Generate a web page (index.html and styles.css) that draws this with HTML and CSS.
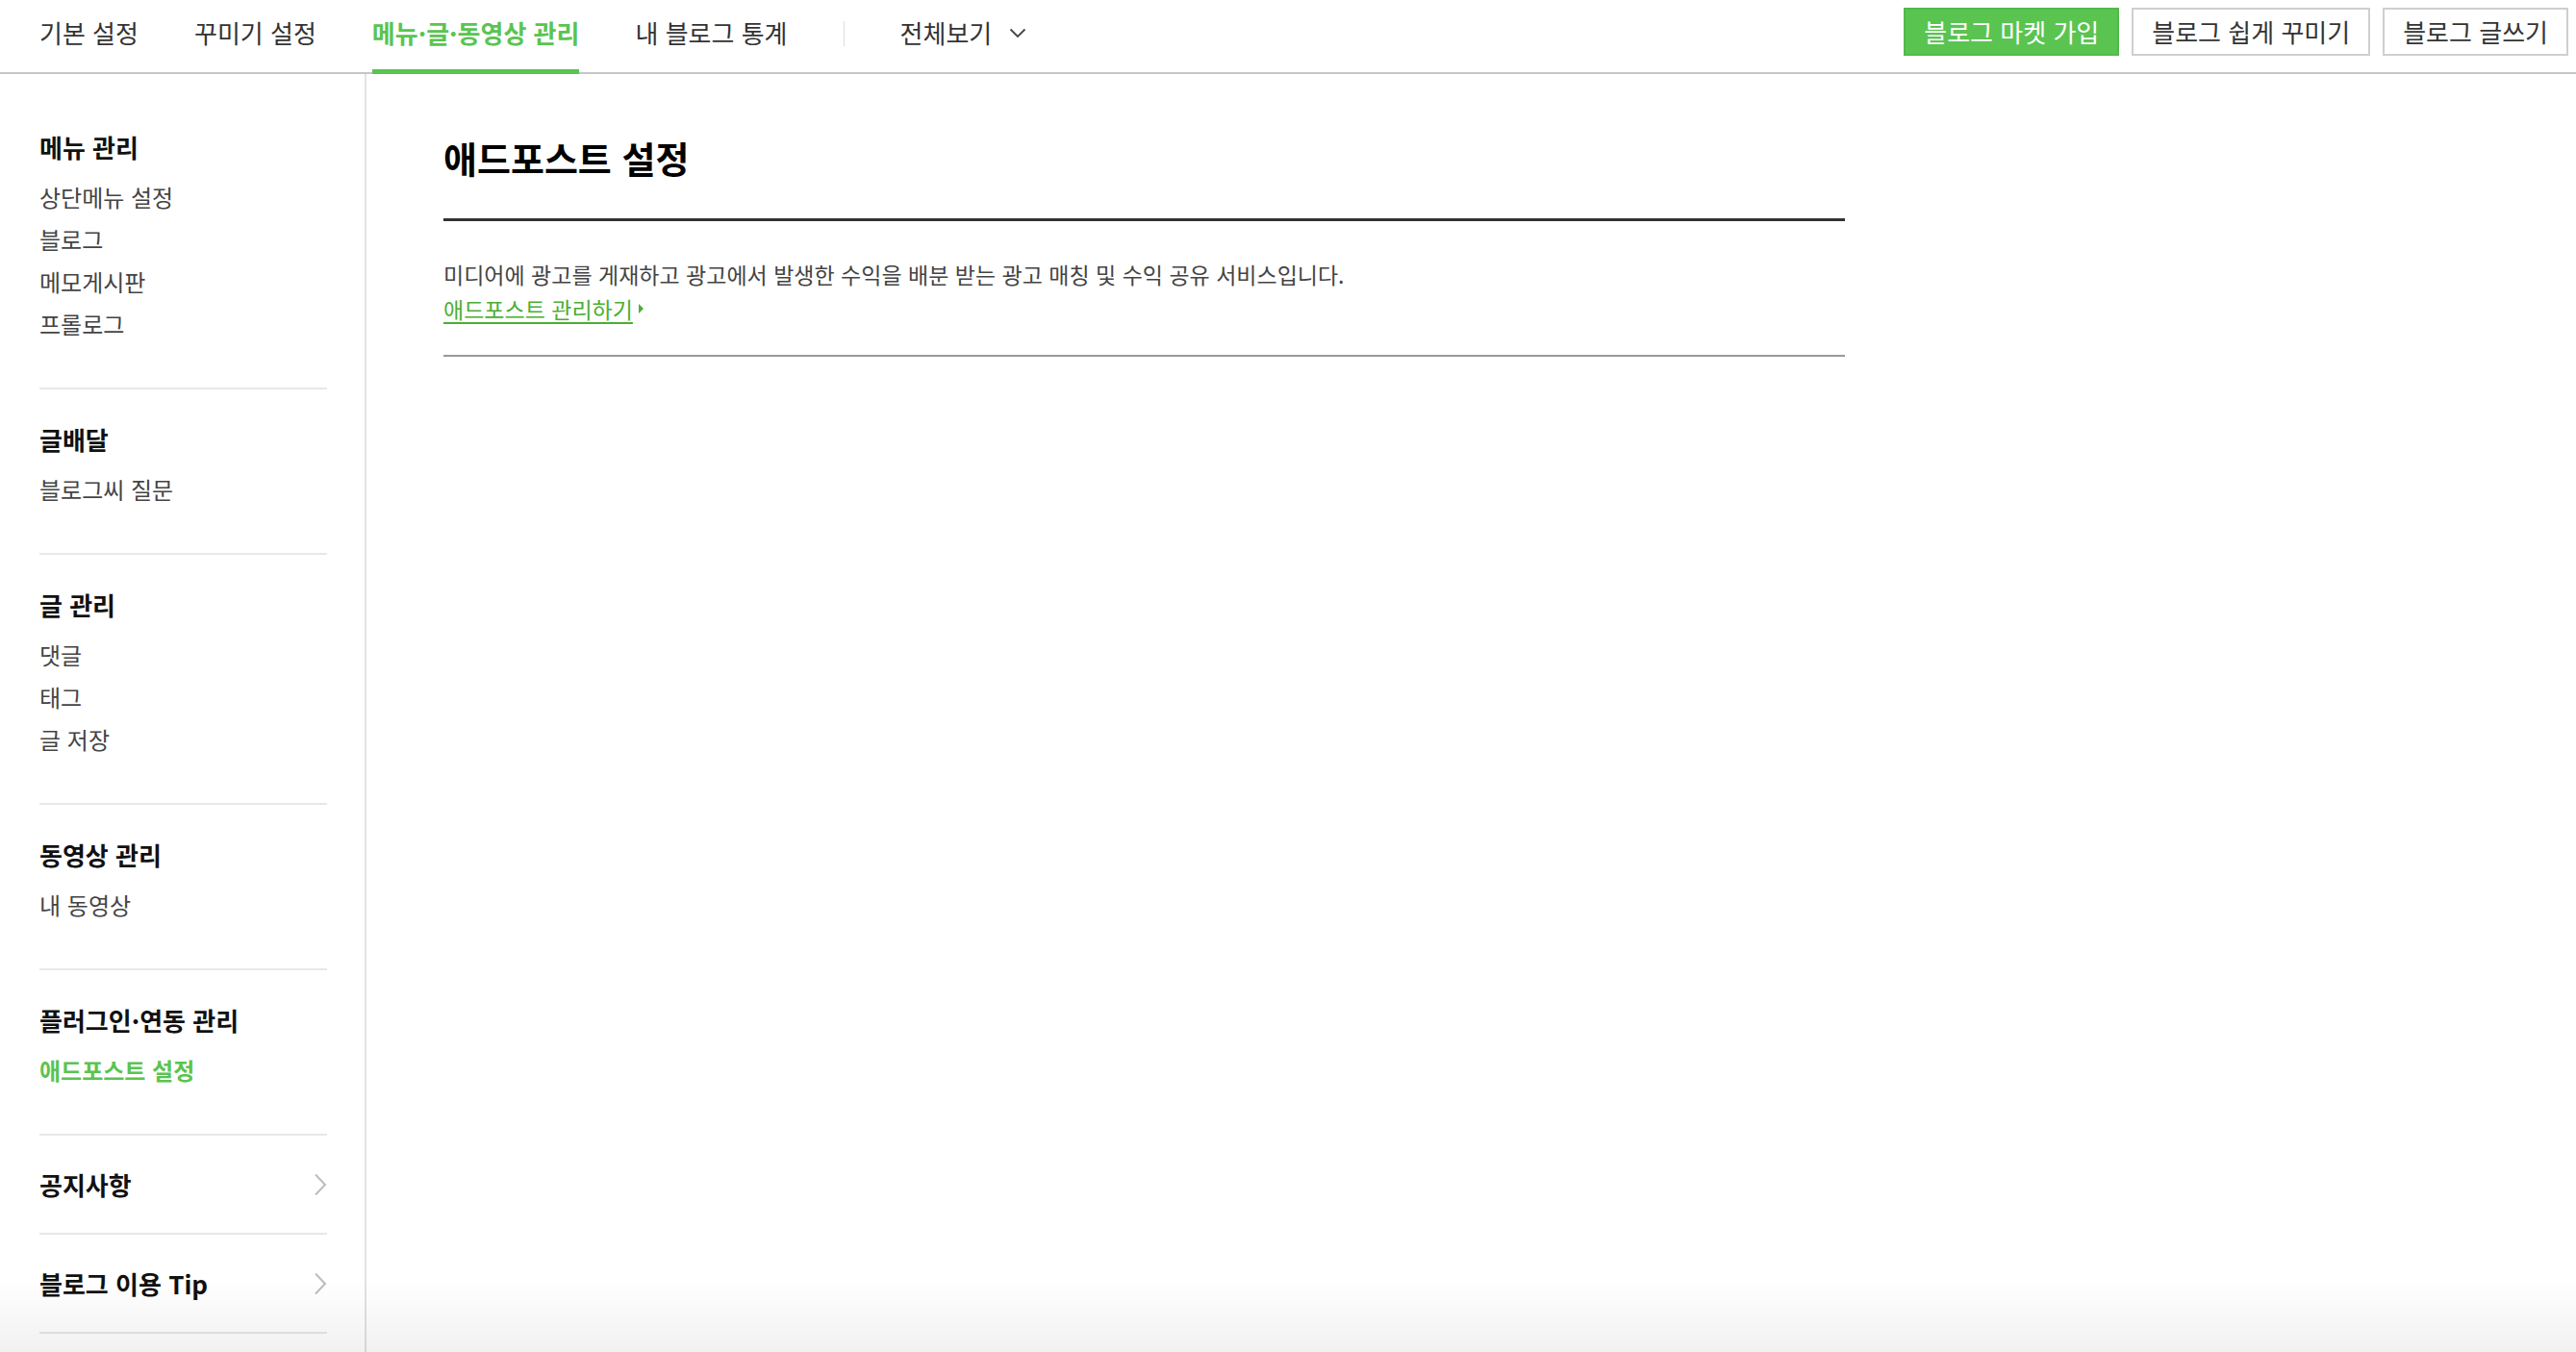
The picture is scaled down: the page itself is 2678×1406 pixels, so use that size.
FILE: index.html
```html
<!DOCTYPE html>
<html lang="ko">
<head>
    <meta charset="UTF-8">
    <meta name="viewport" content="width=device-width, initial-scale=1.0">
    <title>애드포스트 설정</title>
    <link rel="stylesheet" href="styles.css">
</head>
<body>
    <header class="top-header">
        <nav class="top-nav">
            <a class="nav-item">기본 설정</a>
            <a class="nav-item">꾸미기 설정</a>
            <a class="nav-item active">메뉴·글·동영상 관리</a>
            <a class="nav-item">내 블로그 통계</a>
            <span class="nav-divider"></span>
            <a class="nav-item nav-all">전체보기
                <svg class="nav-caret" width="18" height="11" viewBox="0 0 18 11"><path d="M1.5 1.5 L9 9 L16.5 1.5" fill="none" stroke="#444" stroke-width="1.8"/></svg>
            </a>
        </nav>
        <div class="top-buttons">
            <a class="top-btn btn-green">블로그 마켓 가입</a>
            <a class="top-btn">블로그 쉽게 꾸미기</a>
            <a class="top-btn">블로그 글쓰기</a>
        </div>
    </header>

    <div class="layout">
        <aside class="sidebar">
            <div class="side-section">
                <h3 class="side-title">메뉴 관리</h3>
                <ul class="side-list">
                    <li>상단메뉴 설정</li>
                    <li>블로그</li>
                    <li>메모게시판</li>
                    <li>프롤로그</li>
                </ul>
            </div>
            <div class="side-section">
                <h3 class="side-title">글배달</h3>
                <ul class="side-list">
                    <li>블로그씨 질문</li>
                </ul>
            </div>
            <div class="side-section">
                <h3 class="side-title">글 관리</h3>
                <ul class="side-list">
                    <li>댓글</li>
                    <li>태그</li>
                    <li>글 저장</li>
                </ul>
            </div>
            <div class="side-section">
                <h3 class="side-title">동영상 관리</h3>
                <ul class="side-list">
                    <li>내 동영상</li>
                </ul>
            </div>
            <div class="side-section">
                <h3 class="side-title">플러그인·연동 관리</h3>
                <ul class="side-list">
                    <li class="current">애드포스트 설정</li>
                </ul>
            </div>
            <div class="side-section side-link">
                <h3 class="side-title">공지사항</h3>
                <svg class="side-arrow" width="14" height="24" viewBox="0 0 14 24"><path d="M2 1.5 L12 12 L2 22.5" fill="none" stroke="#bdbdbd" stroke-width="2"/></svg>
            </div>
            <div class="side-section side-link last">
                <h3 class="side-title">블로그 이용 Tip</h3>
                <svg class="side-arrow" width="14" height="24" viewBox="0 0 14 24"><path d="M2 1.5 L12 12 L2 22.5" fill="none" stroke="#bdbdbd" stroke-width="2"/></svg>
            </div>
        </aside>

        <main class="content">
            <h2 class="page-title">애드포스트 설정</h2>
            <div class="info-box">
                <p class="info-text">미디어에 광고를 게재하고 광고에서 발생한 수익을 배분 받는 광고 매칭 및 수익 공유 서비스입니다.</p>
                <a class="info-link"><span>애드포스트 관리하기</span><i class="link-tri"></i></a>
            </div>
        </main>
    </div>

    <div class="bottom-fade"></div>
</body>
</html>
```

FILE: styles.css
```css
* {
    box-sizing: border-box;
    margin: 0;
    padding: 0;
    font-family: "Noto Sans CJK KR", "Noto Sans", sans-serif;
}

body {
    background-color: #fff;
    color: #333;
}

a {
    color: inherit;
    text-decoration: none;
    cursor: pointer;
}

ul {
    list-style: none;
}

/* header */
.top-header {
    display: flex;
    justify-content: space-between;
    align-items: stretch;
    height: 77px;
    border-bottom: 2px solid #c6c6c6;
}

.top-nav {
    display: flex;
    align-items: stretch;
    gap: 58px;
    padding-left: 41px;
}

.nav-item {
    display: flex;
    align-items: center;
    padding-bottom: 6px;
    font-size: 26px;
    color: #333;
    border-bottom: 5px solid transparent;
    margin-bottom: -2px;
}

.nav-item.active {
    color: #5ac451;
    font-weight: 700;
    border-bottom-color: #5ac451;
}

.nav-divider {
    width: 1px;
    height: 26px;
    margin-top: 22px;
    background-color: #dcdcdc;
}

.nav-all {
    gap: 18px;
}

.nav-caret {
    margin-top: 2px;
}

.top-buttons {
    display: flex;
    gap: 13px;
    padding: 8px 8px 0 0;
}

.top-btn {
    display: flex;
    align-items: center;
    height: 50px;
    padding: 0 19px 2px;
    border: 2px solid #cfcfcf;
    background-color: #fff;
    font-size: 26px;
    color: #333;
}

.btn-green {
    background-color: #5ac451;
    border-color: #52b949;
    color: #fff;
}

/* body */
.layout {
    display: flex;
    min-height: calc(100vh - 77px);
}

.sidebar {
    width: 381px;
    flex-shrink: 0;
    padding: 24px 39px 0 41px;
    border-right: 2px solid #e2e2e2;
}

.side-section {
    padding: 34px 0 44px;
    border-top: 2px solid #e8e8e8;
}

.side-section:first-child {
    border-top: none;
}

.side-section.last {
    border-bottom: 2px solid #e8e8e8;
}

.side-title {
    font-size: 26px;
    font-weight: 700;
    line-height: 36px;
    color: #111;
}

.side-list {
    margin-top: 12px;
}

.side-list li {
    font-size: 24px;
    line-height: 44px;
    color: #444;
}

.side-list li.current {
    color: #5ac451;
    font-weight: 700;
}

.side-link {
    display: flex;
    justify-content: space-between;
    align-items: center;
    padding: 33px 0 32px;
}

.content {
    flex: 1;
    padding: 63px 0 0 80px;
}

.page-title {
    width: 1457px;
    padding-bottom: 39px;
    border-bottom: 3px solid #333;
    font-size: 38px;
    line-height: 48px;
    font-weight: 700;
    color: #000;
}

.info-box {
    width: 1457px;
    padding: 37px 0 30px;
    border-bottom: 2px solid #999;
}

.info-text {
    font-size: 23px;
    line-height: 36px;
    color: #444;
}

.info-link {
    display: inline-flex;
    align-items: center;
    gap: 6px;
    font-size: 23px;
    line-height: 36px;
    color: #4cae32;
}

.info-link span {
    text-decoration: underline;
    text-underline-offset: 4px;
}

.link-tri {
    width: 0;
    height: 0;
    border-top: 5px solid transparent;
    border-bottom: 5px solid transparent;
    border-left: 5px solid #4cae32;
}

.bottom-fade {
    position: fixed;
    left: 0;
    right: 0;
    bottom: 0;
    height: 75px;
    background: linear-gradient(rgba(0, 0, 0, 0), rgba(0, 0, 0, 0.055));
    pointer-events: none;
}
```
